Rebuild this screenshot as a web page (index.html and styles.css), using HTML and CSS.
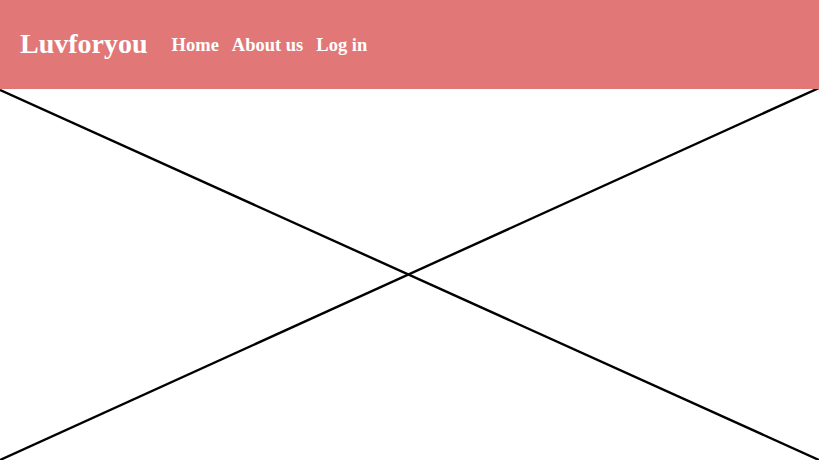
FILE: index.html
```html
<!DOCTYPE html>
<html>
<head>
<meta charset="utf-8">
<link rel="stylesheet" href="styles.css">
</head>
<body>
<header class="topbar">
  <span class="brand">Luvforyou</span>
  <nav class="nav">
    <a href="#">Home</a>
    <a href="#">About us</a>
    <a href="#">Log in</a>
  </nav>
</header>
<main class="hero">
  <svg class="placeholder" viewBox="0 0 819 371" preserveAspectRatio="none">
    <line x1="0" y1="1" x2="819" y2="371" stroke="#000" stroke-width="2.4"/>
    <line x1="819" y1="-1" x2="0" y2="371" stroke="#000" stroke-width="2.4"/>
  </svg>
</main>
</body>
</html>
```
FILE: styles.css
```css
html, body {
  margin: 0;
  padding: 0;
  background: #fff;
  overflow: hidden;
}
.topbar {
  height: 89px;
  background: #e27777;
  display: flex;
  align-items: center;
  padding: 0 0 0 20px;
  font-family: "Liberation Serif", "Times New Roman", serif;
  font-weight: bold;
  color: #fff;
}
.brand {
  font-size: 28px;
  margin-right: 24px;
  margin-top: -2px;
}
.nav {
  display: flex;
  gap: 13px;
  margin-top: 1px;
}
.nav a {
  color: #fff;
  text-decoration: none;
  font-size: 18.5px;
}
.hero {
  height: 371px;
}
.placeholder {
  display: block;
  width: 819px;
  height: 371px;
}
```
